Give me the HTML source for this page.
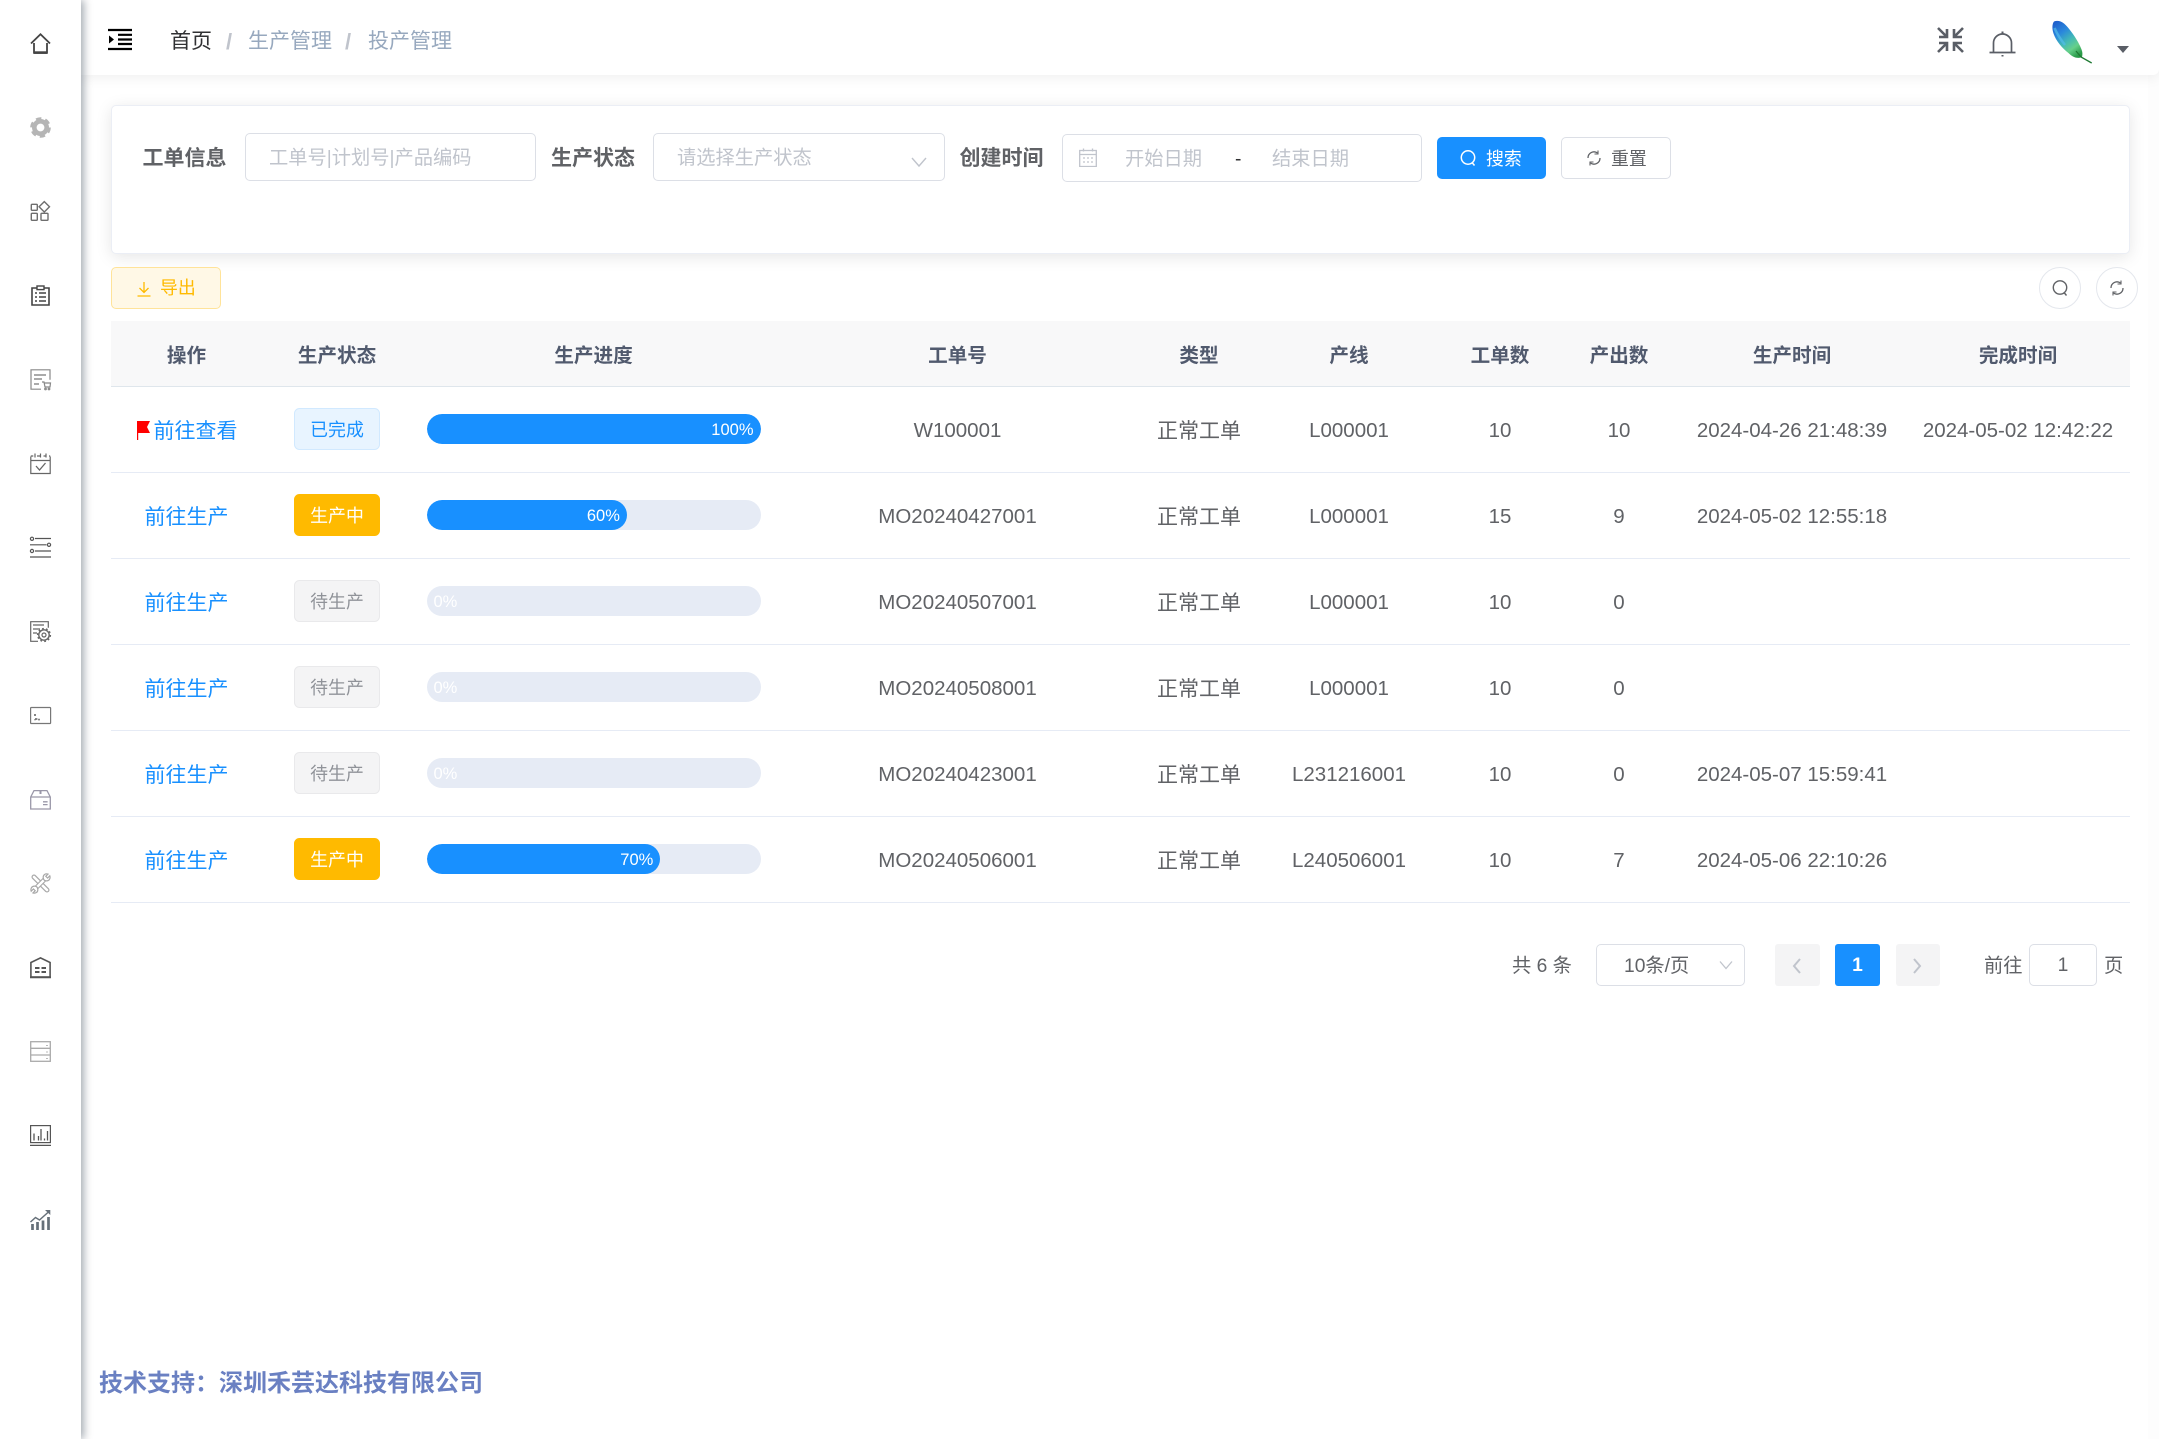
<!DOCTYPE html>
<html lang="zh-CN">
<head>
<meta charset="utf-8">
<title>投产管理</title>
<style>
*{box-sizing:border-box;margin:0;padding:0}
html,body{width:2159px;height:1439px;overflow:hidden;background:#fff;font-family:"Liberation Sans","Noto Sans CJK SC",sans-serif;color:#606266}
.a{position:absolute}
.t{position:absolute;white-space:nowrap;line-height:28px;height:28px}
.side{left:0;top:0;width:81px;height:1439px;background:#fff;box-shadow:3px 0 8px rgba(0,21,41,.35);z-index:5}
.side svg{position:absolute;left:30px;width:21px;height:21px;overflow:visible;fill:none}
.band{left:2148px;top:0;width:11px;height:1439px;background:#fdfdfd}
.head{left:81px;top:0;width:2078px;height:75px;background:#fff;box-shadow:0 2px 14px rgba(0,0,0,.07);border-bottom-right-radius:6px;z-index:3}
.card{left:111px;top:105px;width:2019px;height:149px;background:#fff;border:1px solid #ebeef5;border-radius:5px;box-shadow:0 3px 16px rgba(0,0,0,.1)}
.inp{position:absolute;background:#fff;border:1.4px solid #dcdfe6;border-radius:5px}
.lab{font-size:21px;font-weight:700;color:#606266}
.ph{font-size:19.25px;color:#c0c4cc}
.btn{position:absolute;border-radius:5px;font-size:17.9px;text-align:center}
table{position:absolute;left:111px;top:321px;width:2019px;border-collapse:collapse;table-layout:fixed}
th{height:65px;background:#f8f8f9;border-bottom:1.4px solid #dfe6ec;font-size:19.6px;font-weight:700;color:#515a6e;text-align:center;padding:0}
td{height:86px;border-bottom:1.4px solid #e6ebf5;font-size:21px;color:#606266;text-align:center;padding:0;white-space:nowrap}
td:nth-child(1),td:nth-child(5){padding-top:2px}
td:nth-child(4),td:nth-child(6),td:nth-child(7),td:nth-child(8),td:nth-child(9),td:nth-child(10){font-size:20.5px;padding-top:4px}
td a{color:#1890ff;text-decoration:none}
.tag{display:inline-block;width:86px;height:42px;line-height:42px;font-size:17.9px;border-radius:5.5px;border:1.4px solid;vertical-align:middle}
.done{background:#e8f4ff;border-color:#d1e9ff;color:#1890ff}
.run{background:#ffba00;border-color:#ffba00;color:#fff}
.wait{background:#f4f4f5;border-color:#e9e9eb;color:#909399}
.bar{position:relative;display:block;width:334px;height:30px;border-radius:15px;background:#e6ebf5;margin:0 auto;text-align:right;overflow:hidden}
.bar i{display:block;height:30px;border-radius:15px;background:#1890ff;color:#fff;font-style:normal;font-size:16.5px;line-height:32px;padding-right:7px;white-space:nowrap}
.bar .z{background:none;width:auto;text-align:left;padding-left:7px;padding-right:0}
.pg{position:absolute;top:944px;height:42px;border-radius:3px;background:#f4f4f5;color:#c0c4cc}
</style>
</head>
<body>

<div class="a band"></div>

<!-- sidebar -->
<div class="a side">
<svg style="top:33px" viewBox="0 0 21 21" stroke="#444" stroke-width="1.8"><path d="M1 10.5 10.5 1.2 20 10.5M4 10v9.8h13V10"/><path d="M4 19.6h13" stroke-width="2.6"/></svg>
<svg style="top:117px" viewBox="0 0 21 21" stroke="#b5b5b5"><circle cx="10.5" cy="10.5" r="6.2" stroke-width="4.6"/><circle cx="10.5" cy="10.5" r="9" stroke-width="2.6" stroke-dasharray="5.4 4"/></svg>
<svg style="top:201px" viewBox="0 0 21 21" stroke="#6e6e6e" stroke-width="1.4"><rect x="1.300" y="3.300" width="6" height="6" rx=".8"/><path d="M14.300 .6 19.500 5.800 14.300 11 9.100 5.800Z"/><rect x="1.300" y="12.300" width="6" height="7" rx=".8"/><rect x="11" y="12.300" width="7" height="7" rx=".8"/></svg>
<svg style="top:285px" viewBox="0 0 21 21" stroke="#444" stroke-width="1.6"><path d="M6.500 3H2v17h17V3h-4.500"/><rect x="7" y="1" width="7" height="3.600" stroke-width="1.400"/><path d="M5 8h2M9 8h7M5 12h2M9 12h7M5 16h2M9 16h7" stroke-width="1.500"/></svg>
<svg style="top:369px" viewBox="0 0 21 21" stroke="#888" stroke-width="1.200"><path d="M11 20.200H1V.8h19v10"/><path d="M4 6h12M4 10h8M4 15h5" stroke="#777"/><path d="M12 13h2l1 5h5l.5-4h-6"/><circle cx="15.500" cy="20" r=".8"/><circle cx="19" cy="20" r=".8"/></svg>
<svg style="top:453px" viewBox="0 0 21 21" stroke="#666" stroke-width="1.200"><path d="M.8 3.500v17h19.400v-17M.8 7.500h19.400M.8 3h2.500M7 3h3M13.500 3h3M19 3h1.200M5 .5v4M10.500 .5v4M16 .5v4"/><path d="M6 13l3.500 4 6-7" stroke-width="1.300"/></svg>
<svg style="top:537px" viewBox="0 0 21 21" stroke="#555" stroke-width="1.200"><path d="M5 1.500h16M0 7.800h16.500M5 14h16M0 20h21"/><circle cx="2" cy="1.800" r="1.600"/><circle cx="19" cy="7.800" r="1.600"/><circle cx="2" cy="14" r="1.600"/></svg>
<svg style="top:621px" viewBox="0 0 21 21" stroke="#666" stroke-width="1.200"><path d="M8 20.300H.7V.7h17.600v6"/><path d="M3 4h11M3 8h7M3 12h4"/><circle cx="14" cy="14" r="5.200" stroke-width="1.400"/><circle cx="14" cy="14" r="6.400" stroke-width="1.400" stroke-dasharray="1.800 2.200"/><circle cx="14" cy="14" r="2"/></svg>
<svg style="top:705px" viewBox="0 0 21 21" stroke="#777" stroke-width="1.200"><rect x=".6" y="2.500" width="20" height="16" rx=".8"/><path d="M5 9v2M5 14h2.400M5 14.200v1M9 13.800v1.600" stroke-width="1.800"/></svg>
<svg style="top:789px" viewBox="0 0 21 21" stroke="#9a97a8" stroke-width="1.300"><path d="M.7 8v12h19.600V8L17 1.600H4ZM.7 8h19.600M13 12.800h4.600M13 15.600h4.600"/><path d="M10.500 1.600V5" stroke-width="2"/></svg>
<svg style="top:873px" viewBox="0 0 21 21">
<path d="M4 4 17 17" stroke="#a8a8a8" stroke-width="5" stroke-linecap="round"/><path d="M4 4 17 17" stroke="#fff" stroke-width="2.600" stroke-linecap="round"/>
<path d="M15.500 5.500 5.500 15.500" stroke="#a8a8a8" stroke-width="4.600"/><path d="M15.500 5.500 5.500 15.500" stroke="#fff" stroke-width="2.400"/>
<path d="M19.800 2.800 17.600 5 15.800 3.300 18 1.100C15.500.2 13 1.800 13.200 4.500L13.600 6.300 14.600 7.500 16.500 7.900C19.200 8 20.700 5.300 19.800 2.800ZM1.200 18.200 3.400 16 5.200 17.700 3 19.900C5.500 20.800 8 19.200 7.800 16.500L7.400 14.700 6.400 13.500 4.500 13.100C1.800 13 .3 15.700 1.200 18.200Z" fill="#fff" stroke="#a8a8a8" stroke-width="1.200"/></svg>
<svg style="top:957px" viewBox="0 0 21 21" stroke="#555" stroke-width="1.600"><path d="M.9 20V5.500L10.500 .9 20.100 5.500V20Z"/><path d="M0 20.300h21" stroke-width="1.800"/><path d="M5 11h4.500M11.500 11H16M5 15h4.500M11.500 15H16" stroke-width="2"/></svg>
<svg style="top:1041px" viewBox="0 0 21 21" stroke="#aaa" stroke-width="1.300"><rect x=".7" y=".7" width="19.600" height="19.600"/><path d="M.7 7.300h19.600M.7 14h19.600"/><path d="M17 4v1M17 10.500v1M17 17v1" stroke-width="1.600"/></svg>
<svg style="top:1125px" viewBox="0 0 21 21" stroke="#555" stroke-width="1.200"><rect x=".6" y=".6" width="19.800" height="17"/><path d="M0 20.400h21" stroke-width="1.300"/><path d="M4 15.500v-7M8.500 15.500V11M11 15.500V4M14.500 15.500v-2M17.500 15.500V6" stroke-width="1.300"/></svg>
<svg style="top:1209px" viewBox="0 0 21 21" stroke="#667079"><path d="M.5 13 5.500 8.500l4 2.500L19 2.500" stroke-width="1.500"/><path d="M15 1h5.300v5z" fill="#667079" stroke="none"/><path d="M2.500 15v6M7.500 13v8M13 11.500V21M18.500 8v13" stroke-width="2.700"/></svg>
</div>

<!-- header -->
<div class="a head"></div>
<div class="a" style="z-index:4;left:0;top:0">
<svg class="a" style="left:108px;top:28px" width="24" height="23" viewBox="0 0 24 23" fill="none"><path d="M0 2h24M10 11.500h14M10 6.800h14M10 16h14M0 21h24" stroke="#000" stroke-width="2.200"/><path d="M1 7.500 6 11.500 1 15.500Z" fill="#000"/></svg>
<span class="t" style="left:170px;top:28.400px;font-size:21px;color:#303133">首页</span>
<span class="t" style="left:226px;top:28.400px;font-size:22px;color:#c0c4cc;font-weight:700">/</span>
<span class="t" style="left:248px;top:28.400px;font-size:21px;color:#97a8be">生产管理</span>
<span class="t" style="left:345px;top:28.400px;font-size:22px;color:#c0c4cc;font-weight:700">/</span>
<span class="t" style="left:368px;top:28.400px;font-size:21px;color:#97a8be">投产管理</span>

<svg class="a" style="left:1937px;top:27px" width="27" height="26" viewBox="0 0 27 26" fill="none" stroke="#5a5e66" stroke-width="2.600"><path d="M1 1l8 8M10 2v8H2M26 1l-8 8M17 2v8h8M1 25l8-8M10 24v-8H2M26 25l-8-8M17 24v-8h8"/></svg>
<svg class="a" style="left:1989px;top:31px" width="27" height="26" viewBox="0 0 27 26" fill="none" stroke="#5a5e66" stroke-width="1.700"><path d="M4.500 21.500V12a9 9 0 0 1 18 0v9.500M.5 21.500h26"/><path d="M13.500 .5v2M13.500 24v1.500" stroke-width="2"/></svg>
<svg class="a" style="left:2052px;top:20px;overflow:visible" width="42" height="44" viewBox="0 0 42 44">
<defs><linearGradient id="f" x1=".15" y1="0" x2=".75" y2="1"><stop offset="0" stop-color="#1f5fcc"/><stop offset=".3" stop-color="#2a88dc"/><stop offset=".55" stop-color="#42b8b8"/><stop offset=".78" stop-color="#66d08a"/><stop offset="1" stop-color="#2a9a48"/></linearGradient></defs>
<path d="M2 1.500C5 .2 9 1 12 3.500 17 8 22 15 26 22 29 28 31.500 32 30 37 26 39 21 37.500 17 33.500 10 28 4 21 1.500 13.500 0 9 0 4 2 1.500Z" fill="url(#f)"/>
<path d="M2.500 8C5 14 9 20 13 25" fill="none" stroke="#52bcea" stroke-width="2.600" opacity=".7"/>
<path d="M24 31 29 37 39.700 43" fill="none" stroke="#1f7a33" stroke-width="1.300"/>
</svg>
<div class="a" style="left:2117px;top:46px;width:0;height:0;border-left:6px solid transparent;border-right:6px solid transparent;border-top:7px solid #5a5e66"></div>
</div>

<!-- filter card -->
<div class="a card"></div>
<span class="t lab" style="left:142.500px;top:145.400px">工单信息</span>
<div class="inp" style="left:245px;top:133px;width:291px;height:48px"></div>
<span class="t ph" style="left:269px;top:145.400px">工单号|计划号|产品编码</span>

<span class="t lab" style="left:551px;top:145.400px">生产状态</span>
<div class="inp" style="left:653px;top:133px;width:292px;height:48px"></div>
<span class="t ph" style="left:677px;top:145.400px">请选择生产状态</span>
<svg class="a" style="left:910px;top:156px" width="18" height="12" viewBox="0 0 18 12" fill="none" stroke="#c0c4cc" stroke-width="1.400"><path d="M2 2l7 8 7-8"/></svg>

<span class="t lab" style="left:959.500px;top:145.400px">创建时间</span>
<div class="inp" style="left:1062px;top:134px;width:360px;height:48px"></div>
<svg class="a" style="left:1079px;top:148px" width="18" height="19" viewBox="0 0 18 19" fill="none" stroke="#c0c4cc" stroke-width="1.300"><rect x=".7" y="2.500" width="16.600" height="16"/><path d="M.7 6.500h16.600M4.500 .5v3M13.500 .5v3M4 10h2M8 10h2M12 10h2M4 14h2M8 14h2M12 14h2"/></svg>
<span class="t ph" style="left:1125px;top:146.400px">开始日期</span>
<span class="t" style="left:1235px;top:146.400px;font-size:19.250px;color:#303133">-</span>
<span class="t ph" style="left:1272px;top:146.400px">结束日期</span>

<div class="btn" style="left:1437px;top:137px;width:109px;height:42px;background:#1890ff"></div>
<svg class="a" style="left:1460px;top:149px" width="17" height="18" viewBox="0 0 17 18" fill="none" stroke="#fff" stroke-width="1.500"><circle cx="8" cy="8.500" r="6.700"/><path d="M12 13.500l2.500 3"/></svg>
<span class="t" style="left:1486px;top:145px;font-size:17.900px;color:#fff">搜索</span>
<div class="btn" style="left:1561px;top:137px;width:110px;height:42px;background:#fff;border:1.400px solid #dcdfe6"></div>
<svg class="a" style="left:1586px;top:150px" width="16" height="16" viewBox="0 0 16 16" fill="none" stroke="#606266" stroke-width="1.300"><path d="M2 8a6 6 0 0 1 9.500-5M14 8a6 6 0 0 1-9.500 5"/><path d="M12 .5v3.500H8.500M4 15.500V12h3.500" stroke-width="1.100"/></svg>
<span class="t" style="left:1611px;top:145px;font-size:17.900px;color:#606266">重置</span>

<!-- toolbar -->
<div class="btn" style="left:111px;top:267px;width:110px;height:42px;background:#fff8e6;border:1.400px solid #ffe399"></div>
<svg class="a" style="left:135.500px;top:281px" width="16" height="16" viewBox="0 0 16 16" fill="none" stroke="#ffba00" stroke-width="1.300"><path d="M8 1v10M3.500 7 8 11.500 12.500 7M1.500 15h13"/></svg>
<span class="t" style="left:160px;top:274px;font-size:17.900px;color:#ffba00">导出</span>

<div class="a" style="left:2039px;top:267px;width:42px;height:42px;border:1.400px solid #e4e7ed;border-radius:50%;background:#fff"></div>
<svg class="a" style="left:2051.500px;top:279px" width="17" height="18" viewBox="0 0 17 18" fill="none" stroke="#606266" stroke-width="1.400"><circle cx="8" cy="8.500" r="6.700"/><path d="M12 13.500l2.500 3"/></svg>
<div class="a" style="left:2096px;top:267px;width:42px;height:42px;border:1.400px solid #e4e7ed;border-radius:50%;background:#fff"></div>
<svg class="a" style="left:2108.500px;top:280px" width="16" height="16" viewBox="0 0 16 16" fill="none" stroke="#606266" stroke-width="1.300"><path d="M2 8a6 6 0 0 1 9.500-5M14 8a6 6 0 0 1-9.500 5"/><path d="M12 .5v3.500H8.500M4 15.500V12h3.500" stroke-width="1.100"/></svg>

<!-- table -->
<table>
<colgroup><col style="width:151px"><col style="width:150px"><col style="width:363px"><col style="width:365px"><col style="width:118px"><col style="width:182px"><col style="width:120px"><col style="width:118px"><col style="width:228px"><col style="width:224px"></colgroup>
<thead><tr><th>操作</th><th>生产状态</th><th>生产进度</th><th>工单号</th><th>类型</th><th>产线</th><th>工单数</th><th>产出数</th><th>生产时间</th><th>完成时间</th></tr></thead>
<tbody>
<tr><td><a style="padding-left:18px">前往查看</a></td><td><span class="tag done">已完成</span></td><td><span class="bar"><i style="width:100%">100%</i></span></td><td>W100001</td><td>正常工单</td><td>L000001</td><td>10</td><td>10</td><td>2024-04-26 21:48:39</td><td>2024-05-02 12:42:22</td></tr>
<tr><td><a>前往生产</a></td><td><span class="tag run">生产中</span></td><td><span class="bar"><i style="width:60%">60%</i></span></td><td>MO20240427001</td><td>正常工单</td><td>L000001</td><td>15</td><td>9</td><td>2024-05-02 12:55:18</td><td></td></tr>
<tr><td><a>前往生产</a></td><td><span class="tag wait">待生产</span></td><td><span class="bar"><i class="z">0%</i></span></td><td>MO20240507001</td><td>正常工单</td><td>L000001</td><td>10</td><td>0</td><td></td><td></td></tr>
<tr><td><a>前往生产</a></td><td><span class="tag wait">待生产</span></td><td><span class="bar"><i class="z">0%</i></span></td><td>MO20240508001</td><td>正常工单</td><td>L000001</td><td>10</td><td>0</td><td></td><td></td></tr>
<tr><td><a>前往生产</a></td><td><span class="tag wait">待生产</span></td><td><span class="bar"><i class="z">0%</i></span></td><td>MO20240423001</td><td>正常工单</td><td>L231216001</td><td>10</td><td>0</td><td>2024-05-07 15:59:41</td><td></td></tr>
<tr><td><a>前往生产</a></td><td><span class="tag run">生产中</span></td><td><span class="bar"><i style="width:70%">70%</i></span></td><td>MO20240506001</td><td>正常工单</td><td>L240506001</td><td>10</td><td>7</td><td>2024-05-06 22:10:26</td><td></td></tr>
</tbody>
</table>
<svg class="a" style="left:136px;top:421px" width="15" height="19" viewBox="0 0 15 19"><path d="M1 0h13l-3 6 3 6H2.200v7H1Z" fill="#f00"/></svg>

<!-- pagination -->
<span class="t" style="left:1512px;top:953px;font-size:19.250px;color:#606266">共 6 条</span>
<div class="inp" style="left:1596px;top:944px;width:149px;height:42px"></div>
<span class="t" style="left:1624px;top:953.400px;font-size:19.250px;color:#606266">10条/页</span>
<svg class="a" style="left:1719px;top:960px" width="14" height="10" viewBox="0 0 14 10" fill="none" stroke="#c0c4cc" stroke-width="1.300"><path d="M1 1.500l6 7 6-7"/></svg>
<div class="pg" style="left:1775px;width:45px"></div>
<svg class="a" style="left:1791px;top:957px" width="11" height="18" viewBox="0 0 11 18" fill="none" stroke="#c0c4cc" stroke-width="2"><path d="M9 2 3 9l6 7"/></svg>
<div class="pg" style="left:1835px;width:45px;background:#1890ff;color:#fff;font-size:19.250px;font-weight:700;text-align:center;line-height:44px">1</div>
<div class="pg" style="left:1896px;width:44px"></div>
<svg class="a" style="left:1912px;top:957px" width="11" height="18" viewBox="0 0 11 18" fill="none" stroke="#c0c4cc" stroke-width="2"><path d="M2 2l6 7-6 7"/></svg>
<span class="t" style="left:1984px;top:953.400px;font-size:19.250px;color:#606266">前往</span>
<div class="inp" style="left:2029px;top:944px;width:68px;height:42px;text-align:center;font-size:19.250px;line-height:42px;color:#606266">1</div>
<span class="t" style="left:2104px;top:953.400px;font-size:19.250px;color:#606266">页</span>

<!-- footer -->
<span class="t" style="left:99px;top:1369.500px;font-size:24px;font-weight:700;color:#6a80c2">技术支持：深圳禾芸达科技有限公司</span>

</body>
</html>
